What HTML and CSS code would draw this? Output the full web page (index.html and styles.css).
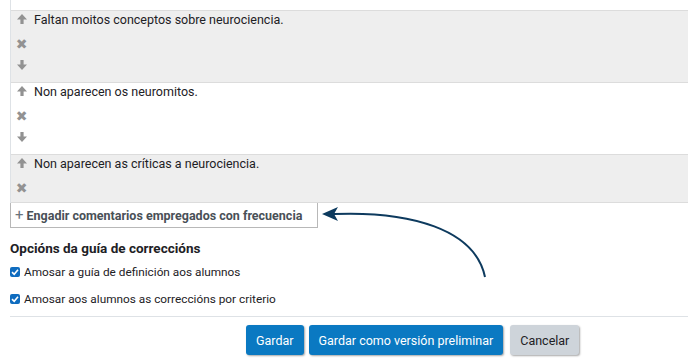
FILE: index.html
```html
<!DOCTYPE html>
<html lang="gl">
<head>
<meta charset="utf-8">
<link rel="stylesheet" href="styles.css">
</head>
<body>
<div class="page">
  <div class="comments">
    <div class="row shaded">
      <div class="line"><span class="ico"><svg class="i up" viewBox="0 0 10 10"><path d="M5 0 L10 5.4 H6.6 V10 H3.4 V5.4 H0 Z"/></svg></span><span class="txt">Faltan moitos conceptos sobre neurociencia.</span></div>
      <div class="line"><span class="ico x">✖</span></div>
      <div class="line"><span class="ico"><svg class="i dn" viewBox="0 0 10 10"><path d="M5 10 L10 4.6 H6.6 V0 H3.4 V4.6 H0 Z"/></svg></span></div>
    </div>
    <div class="row">
      <div class="line"><span class="ico"><svg class="i up" viewBox="0 0 10 10"><path d="M5 0 L10 5.4 H6.6 V10 H3.4 V5.4 H0 Z"/></svg></span><span class="txt">Non aparecen os neuromitos.</span></div>
      <div class="line"><span class="ico x">✖</span></div>
      <div class="line"><span class="ico"><svg class="i dn" viewBox="0 0 10 10"><path d="M5 10 L10 4.6 H6.6 V0 H3.4 V4.6 H0 Z"/></svg></span></div>
    </div>
    <div class="row shaded last">
      <div class="line"><span class="ico"><svg class="i up" viewBox="0 0 10 10"><path d="M5 0 L10 5.4 H6.6 V10 H3.4 V5.4 H0 Z"/></svg></span><span class="txt">Non aparecen as críticas a neurociencia.</span></div>
      <div class="line"><span class="ico x">✖</span></div>
    </div>
  </div>
  <div class="addwrap">
    <button class="add"><span class="plus">+</span> Engadir comentarios empregados con frecuencia</button>
    <svg class="arrow" width="200" height="84" viewBox="0 0 200 84">
      <path d="M14 13 C 90 10, 155 28, 165 76" fill="none" stroke="#0d3a5e" stroke-width="2"/>
      <polygon points="2,13 18,6 14,13 18,20" fill="#0d3a5e"/>
    </svg>
  </div>
  <h3 class="opts">Opcións da guía de correccións</h3>
  <label class="chk"><span class="box"><svg width="10" height="10" viewBox="0 0 10 10"><path d="M2 5.2 L4.2 7.3 L8 2.8" fill="none" stroke="#fff" stroke-width="1.6"/></svg></span>Amosar a guía de definición aos alumnos</label>
  <label class="chk"><span class="box"><svg width="10" height="10" viewBox="0 0 10 10"><path d="M2 5.2 L4.2 7.3 L8 2.8" fill="none" stroke="#fff" stroke-width="1.6"/></svg></span>Amosar aos alumnos as correccións por criterio</label>
  <div class="actions">
    <button class="btn primary">Gardar</button>
    <button class="btn primary">Gardar como versión preliminar</button>
    <button class="btn secondary">Cancelar</button>
  </div>
</div>
</body>
</html>
```

FILE: styles.css
```css
* { box-sizing: border-box; }
html, body { margin: 0; padding: 0; background: #fff; }
body {
  font-family: "Roboto", "Liberation Sans", sans-serif;
  font-size: 12.5px;
  color: #1d2125;
  width: 688px;
  height: 364px;
  overflow: hidden;
}
.page { padding-left: 10px; }
.comments {
  border-left: 1px solid #dee2e6;
  height: 203px;
}
.comments::before {
  content: "";
  display: block;
  height: 10px;
}
.row {
  border-top: 1px solid #dcdcdc;
  height: 72px;
}
.row.last { height: 49px; border-bottom: 1px solid #dcdcdc; }
.shaded { background: #eeeeee; }
.line {
  display: flex;
  align-items: flex-start;
  height: 22px;
  line-height: 18px;
}
.ico {
  width: 21px;
  margin-right: 2px;
  flex: none;
  display: flex;
  justify-content: center;
  font-family: "DejaVu Sans", sans-serif;
  font-size: 14px;
  color: #929292;
}
.ico.x { margin-top: 2px; }
.i { width: 10px; height: 10px; display: block; fill: #929292; }
.i.up { margin-top: 3px; }
.i.dn { margin-top: 5px; }
.txt { font-size: 12.5px; }
.addwrap { position: relative; height: 25px; }
.add {
  height: 25px;
  margin: 0;
  padding: 0 8px 0 4px;
  border: 1px solid #b8b8b8;
  border-top: none;
  background: #fff;
  font-family: "Roboto", "Liberation Sans", sans-serif;
  font-weight: bold;
  font-size: 12.5px;
  color: #495057;
  display: flex;
  align-items: center;
  width: 308px;
}
.plus { font-weight: normal; font-size: 15px; margin-right: 3px; color: #6a737b; }
.arrow { position: absolute; left: 310px; top: -2px; }
.opts {
  margin: 12px 0 0 0;
  font-size: 13.5px;
  font-weight: bold;
  height: 18px;
}
.chk {
  display: flex;
  align-items: center;
  height: 27px;
  font-size: 11.8px;
}
.box {
  width: 10px; height: 10px;
  background: #0f6cbf;
  border-radius: 2px;
  margin-right: 4px;
  display: flex;
  align-items: center;
  justify-content: center;
}
.box svg { display: block; }
.actions {
  margin-top: 4px;
  border-top: 1px solid #dee2e6;
  padding-top: 8px;
  padding-left: 236px;
  display: flex;
  gap: 5px;
}
.btn {
  font-family: "Roboto", "Liberation Sans", sans-serif;
  font-size: 12.5px;
  height: 30px;
  padding: 0 10px;
  border: none;
  border-radius: 3px;
  box-shadow: 1px 1px 2px rgba(0,0,0,0.35);
}
.primary { background: #0a79c2; color: #fff; }
.secondary { background: #ced4da; color: #1d2125; margin-left: 2px; }
```
